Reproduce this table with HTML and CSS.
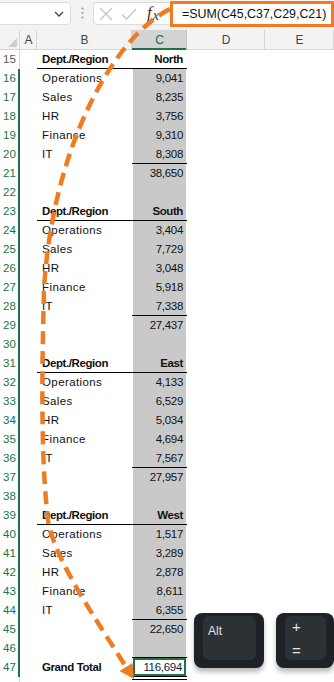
FILE: index.html
```html
<!DOCTYPE html>
<html>
<head>
<meta charset="utf-8">
<link rel="stylesheet" href="styles.css">
</head>
<body>
<div class="app">
  <div class="toolbar">
    <div class="namebox">
      <svg class="chev" width="10" height="6" viewBox="0 0 10 6"><path d="M1 1 L5 5 L9 1" fill="none" stroke="#444" stroke-width="1.3"/></svg>
    </div>
    <div class="dots">
      <svg width="3" height="12" viewBox="0 0 3 12"><circle cx="1.5" cy="1.5" r="1.1" fill="#9a9a9a"/><circle cx="1.5" cy="6" r="1.1" fill="#9a9a9a"/><circle cx="1.5" cy="10.5" r="1.1" fill="#9a9a9a"/></svg>
    </div>
    <div class="fbox">
      <svg class="ic-x" width="14" height="14" viewBox="0 0 14 14"><path d="M1 1 L13 13 M13 1 L1 13" stroke="#c4c4c4" stroke-width="1.3" fill="none"/></svg>
      <svg class="ic-ok" width="16" height="12" viewBox="0 0 16 12"><path d="M1 6.5 L5.5 11 L15 1" stroke="#c4c4c4" stroke-width="1.3" fill="none"/></svg>
      <span class="fx">f<span class="fxx">x</span></span>
    </div>
    <div class="formula">=SUM(C45,C37,C29,C21)</div>
  </div>

  <div class="sheet">
    <div class="r hdr">
      <div class="corner"><svg width="20" height="20" viewBox="0 0 20 20"><path d="M17 8 L17 17 L8 17 Z" fill="#cdcdcd"/></svg></div>
      <div class="h">A</div><div class="h">B</div><div class="h hs">C</div><div class="h">D</div><div class="h">E</div>
    </div>
    <div class="r"><div class="n">15</div><div></div><div class="b hd u">Dept./Region</div><div class="c hd u">North</div><div></div><div></div></div>
    <div class="r"><div class="n s">16</div><div></div><div class="b">Operations</div><div class="c g">9,041</div><div></div><div></div></div>
    <div class="r"><div class="n s">17</div><div></div><div class="b">Sales</div><div class="c g">8,235</div><div></div><div></div></div>
    <div class="r"><div class="n s">18</div><div></div><div class="b">HR</div><div class="c g">3,756</div><div></div><div></div></div>
    <div class="r"><div class="n s">19</div><div></div><div class="b">Finance</div><div class="c g">9,310</div><div></div><div></div></div>
    <div class="r"><div class="n s">20</div><div></div><div class="b">IT</div><div class="c g u">8,308</div><div></div><div></div></div>
    <div class="r"><div class="n s">21</div><div></div><div class="b"></div><div class="c g">38,650</div><div></div><div></div></div>
    <div class="r"><div class="n s">22</div><div></div><div class="b"></div><div class="c g"></div><div></div><div></div></div>
    <div class="r"><div class="n s">23</div><div></div><div class="b hd u">Dept./Region</div><div class="c g hd u">South</div><div></div><div></div></div>
    <div class="r"><div class="n s">24</div><div></div><div class="b">Operations</div><div class="c g">3,404</div><div></div><div></div></div>
    <div class="r"><div class="n s">25</div><div></div><div class="b">Sales</div><div class="c g">7,729</div><div></div><div></div></div>
    <div class="r"><div class="n s">26</div><div></div><div class="b">HR</div><div class="c g">3,048</div><div></div><div></div></div>
    <div class="r"><div class="n s">27</div><div></div><div class="b">Finance</div><div class="c g">5,918</div><div></div><div></div></div>
    <div class="r"><div class="n s">28</div><div></div><div class="b">IT</div><div class="c g u">7,338</div><div></div><div></div></div>
    <div class="r"><div class="n s">29</div><div></div><div class="b"></div><div class="c g">27,437</div><div></div><div></div></div>
    <div class="r"><div class="n s">30</div><div></div><div class="b"></div><div class="c g"></div><div></div><div></div></div>
    <div class="r"><div class="n s">31</div><div></div><div class="b hd u">Dept./Region</div><div class="c g hd u">East</div><div></div><div></div></div>
    <div class="r"><div class="n s">32</div><div></div><div class="b">Operations</div><div class="c g">4,133</div><div></div><div></div></div>
    <div class="r"><div class="n s">33</div><div></div><div class="b">Sales</div><div class="c g">6,529</div><div></div><div></div></div>
    <div class="r"><div class="n s">34</div><div></div><div class="b">HR</div><div class="c g">5,034</div><div></div><div></div></div>
    <div class="r"><div class="n s">35</div><div></div><div class="b">Finance</div><div class="c g">4,694</div><div></div><div></div></div>
    <div class="r"><div class="n s">36</div><div></div><div class="b">IT</div><div class="c g u">7,567</div><div></div><div></div></div>
    <div class="r"><div class="n s">37</div><div></div><div class="b"></div><div class="c g">27,957</div><div></div><div></div></div>
    <div class="r"><div class="n s">38</div><div></div><div class="b"></div><div class="c g"></div><div></div><div></div></div>
    <div class="r"><div class="n s">39</div><div></div><div class="b hd u">Dept./Region</div><div class="c g hd u">West</div><div></div><div></div></div>
    <div class="r"><div class="n s">40</div><div></div><div class="b">Operations</div><div class="c g">1,517</div><div></div><div></div></div>
    <div class="r"><div class="n s">41</div><div></div><div class="b">Sales</div><div class="c g">3,289</div><div></div><div></div></div>
    <div class="r"><div class="n s">42</div><div></div><div class="b">HR</div><div class="c g">2,878</div><div></div><div></div></div>
    <div class="r"><div class="n s">43</div><div></div><div class="b">Finance</div><div class="c g">8,611</div><div></div><div></div></div>
    <div class="r"><div class="n s">44</div><div></div><div class="b">IT</div><div class="c g u">6,355</div><div></div><div></div></div>
    <div class="r"><div class="n s">45</div><div></div><div class="b"></div><div class="c g">22,650</div><div></div><div></div></div>
    <div class="r"><div class="n s">46</div><div></div><div class="b"></div><div class="c g u"></div><div></div><div></div></div>
    <div class="r"><div class="n s">47</div><div></div><div class="b hd">Grand Total</div><div class="c act"><div class="actbox">116,694</div></div><div></div><div></div></div>
    <div class="r"><div class="n"></div><div></div><div class="b"></div><div class="c dbl"></div><div></div><div></div></div>
  </div>

  <svg class="arc" width="334" height="682" viewBox="0 0 334 682">
    <path d="M170 9 C112 38 52 150 44 290 C41 400 42 470 48 520 C54 560 100 625 126 667" fill="none" stroke="#f07c22" stroke-width="4.5" stroke-dasharray="13 7"/>
    <polygon points="134,679 119.5,671 132.5,663" fill="#f07c22"/>
  </svg>

  <div class="key key-alt"><div class="face"><span class="klabel">Alt</span></div></div>
  <div class="key key-plus"><div class="face face-col"><span class="klabel">+</span><span class="klabel">=</span></div></div>
</div>
</body>
</html>
```
FILE: styles.css
```css
* { box-sizing: border-box; }
html, body { margin: 0; padding: 0; }
body {
  width: 334px;
  height: 682px;
  overflow: hidden;
  background: #fff;
  font-family: "Liberation Sans", Arial, sans-serif;
}
.app {
  position: relative;
  width: 334px;
  height: 682px;
  overflow: hidden;
}

/* toolbar */
.toolbar {
  display: flex;
  align-items: flex-start;
  height: 30px;
  background: #f3f3f3;
}
.namebox {
  width: 77px;
  margin-left: -6px;
  margin-top: 2px;
  height: 23px;
  background: #fff;
  border: 1px solid #dcdcdc;
  border-radius: 4px;
  display: flex;
  align-items: center;
  justify-content: flex-end;
  padding-right: 6px;
}
.dots {
  width: 22px;
  height: 26px;
  display: flex;
  align-items: center;
  justify-content: center;
  padding-left: 1px;
}
.fbox {
  width: 77px;
  margin-top: 2px;
  height: 23px;
  background: #fff;
  border: 1px solid #dcdcdc;
  border-right: none;
  border-radius: 4px 0 0 4px;
  display: flex;
  align-items: center;
  padding-left: 5px;
}
.ic-x { margin-right: 8px; }
.ic-ok { margin-right: 10px; }
.fx {
  font-family: "Liberation Serif", serif;
  font-style: italic;
  font-size: 17px;
  color: #333;
  line-height: 1;
  margin-top: -2px;
}
.fxx { font-size: 14px; position: relative; top: 2px; margin-left: 1px; }
.formula {
  width: 164px;
  height: 26px;
  margin-top: 1px;
  border: 3px solid #f07c22;
  background: #fff;
  font-size: 12.4px;
  line-height: 20px;
  padding-left: 9px;
  color: #111;
  white-space: nowrap;
}

/* sheet */
.sheet { display: flex; flex-direction: column; }
.r {
  display: grid;
  grid-template-columns: 20px 17px 95px 55px 78px 1fr;
  height: 19px;
  font-size: 11.5px;
  line-height: 19px;
  color: #111;
}
.hdr {
  height: 20px;
  line-height: 20px;
  background: #f3f3f3;
  font-size: 12px;
  color: #444;
}
.corner {
  box-shadow: inset -1px 0 #d6d6d6, inset 0 -1px #d6d6d6;
}
.corner svg { display: block; }
.h {
  text-align: center;
  box-shadow: inset -1px 0 #d6d6d6, inset 0 -1px #d6d6d6;
}
.hs {
  background: #d3d3d3;
  color: #1e6b40;
  box-shadow: inset -1px 0 #c4c4c4, inset 0 -2px #217346;
}
.n {
  text-align: center;
  color: #5a5a5a;
  font-size: 11.5px;
  box-shadow: inset -1px 0 #d6d6d6;
  padding-right: 1px;
}
.n.s {
  color: #217346;
  box-shadow: inset -2px 0 #217346;
}
.b {
  padding-left: 5px;
  letter-spacing: 0.4px;
  white-space: nowrap;
}
.c {
  text-align: right;
  padding-right: 4px;
  letter-spacing: -0.3px;
  white-space: nowrap;
}
.hd {
  font-weight: bold;
  letter-spacing: -0.4px;
}
.g {
  background: linear-gradient(#c9c9c9, #c9c9c9) 1px 0 / 53px 100% no-repeat;
}
.u { box-shadow: inset 0 -1px #000; }
.act {
  padding: 0 1px 1px 1px;
  box-shadow: inset 0 -1px #000;
}
.actbox {
  height: 18px;
  border: 2px solid #217346;
  line-height: 14px;
  padding-right: 2px;
  color: #10243f;
}
.dbl { box-shadow: inset 0 2px #fff, inset 0 3px #000; }

/* overlays */
.arc {
  position: absolute;
  left: 0;
  top: 0;
  pointer-events: none;
}
.key {
  position: absolute;
  top: 613px;
  height: 55px;
  background: #1e2125;
  border-radius: 8px;
  padding: 3px 8px 8px 9px;
  box-shadow: 0 4px 5px rgba(0, 0, 0, 0.28);
}
.key-alt { left: 194px; width: 70px; }
.key-plus { left: 276px; width: 58px; padding-right: 8px; }
.face {
  height: 100%;
  background: #2c3136;
  border-radius: 6px;
  padding: 5px 0 0 5px;
}
.face-col {
  display: flex;
  flex-direction: column;
  padding-left: 7px;
  padding-top: 3px;
  gap: 8px;
}
.klabel {
  color: #e4e4e4;
  font-size: 12px;
  line-height: 13px;
}
.face-col .klabel { font-size: 15px; line-height: 16px; }
```
